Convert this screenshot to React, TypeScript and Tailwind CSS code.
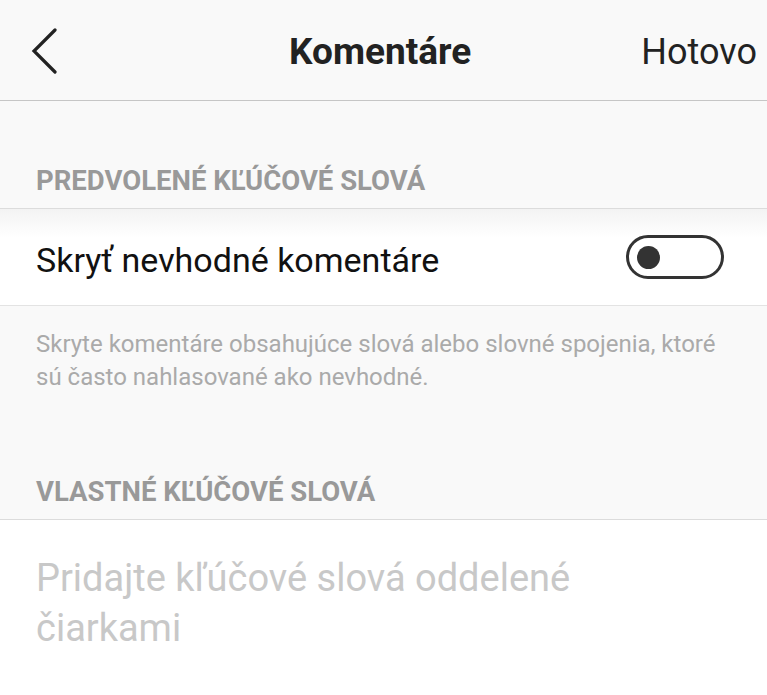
const font = { fontFamily: '"Roboto", "Noto Sans", sans-serif' };

export default function App() {
  return (
    <div className="w-[767px] h-[695px] bg-[#f9f9f9] overflow-hidden" style={font}>

      {/* HEADER */}
      <div className="h-[101px] flex items-center justify-between border-b border-[#c6c6c6] pl-[31px] pr-[10px]">
        <svg width="28" height="46" viewBox="0 0 28 46" fill="none" className="mt-[2px]">
          <polyline points="24,2 3,23 24,44" stroke="#222" strokeWidth="3.2" strokeLinecap="round" strokeLinejoin="miter" />
        </svg>
        <h1 className="text-[37px] font-bold text-[#222] ml-[60px] mt-[4px]">Komentáre</h1>
        <button className="text-[36px] text-[#222] mt-[4px]">Hotovo</button>
      </div>

      {/* PREDVOLENE */}
      <div className="h-[108px] flex items-end pb-[7px] px-[36px] border-b border-[#dcdcdc]">
        <p className="text-[27.5px] font-bold text-[#999]">PREDVOLENÉ KĽÚČOVÉ SLOVÁ</p>
      </div>

      <div className="h-[97px] flex items-center justify-between pl-[36px] pr-[43px] bg-gradient-to-b from-[#f3f3f3] to-white to-[30%] border-b border-[#e3e3e3]">
        <span className="text-[34px] text-[#111] mt-[6px]">Skryť nevhodné komentáre</span>
        <div className="w-[98px] h-[44px] rounded-full border-[3px] border-[#333] bg-white flex items-center pl-[8px]">
          <div className="w-[23px] h-[23px] rounded-full bg-[#333]" />
        </div>
      </div>

      <p className="pl-[36px] pr-[30px] pt-[22px] text-[24px] leading-[33px] text-[#aaa]">
        Skryte komentáre obsahujúce slová alebo slovné spojenia, ktoré sú často nahlasované ako nevhodné.
      </p>

      {/* VLASTNE */}
      <div className="h-[126px] flex items-end pb-[7px] px-[36px] border-b border-[#dcdcdc]">
        <p className="text-[27.5px] font-bold text-[#999]">VLASTNÉ KĽÚČOVÉ SLOVÁ</p>
      </div>

      <div className="bg-white h-full px-[36px] pt-[33px]">
        <p className="text-[38px] leading-[50px] text-[#c8c8c8] w-[580px]">
          Pridajte kľúčové slová oddelené čiarkami
        </p>
      </div>

    </div>
  );
}
